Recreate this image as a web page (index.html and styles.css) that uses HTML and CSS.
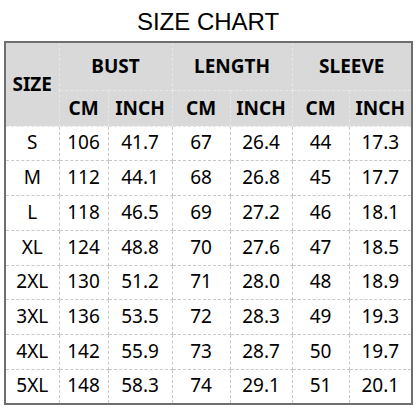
FILE: index.html
```html
<!DOCTYPE html>
<html>
<head>
<meta charset="utf-8">
<link rel="stylesheet" href="styles.css">
</head>
<body>
<h1 class="title">SIZE CHART</h1>
<table class="chart">
  <colgroup>
    <col class="c-size"><col class="c-bcm"><col class="c-bin"><col class="c-lcm"><col class="c-lin"><col class="c-scm"><col class="c-sin">
  </colgroup>
  <thead>
    <tr class="h1">
      <th rowspan="2">SIZE</th>
      <th colspan="2">BUST</th>
      <th colspan="2">LENGTH</th>
      <th colspan="2">SLEEVE</th>
    </tr>
    <tr class="h2">
      <th>CM</th><th>INCH</th><th>CM</th><th>INCH</th><th>CM</th><th>INCH</th>
    </tr>
  </thead>
  <tbody>
    <tr><td>S</td><td>106</td><td>41.7</td><td>67</td><td>26.4</td><td>44</td><td>17.3</td></tr>
    <tr><td>M</td><td>112</td><td>44.1</td><td>68</td><td>26.8</td><td>45</td><td>17.7</td></tr>
    <tr><td>L</td><td>118</td><td>46.5</td><td>69</td><td>27.2</td><td>46</td><td>18.1</td></tr>
    <tr><td>XL</td><td>124</td><td>48.8</td><td>70</td><td>27.6</td><td>47</td><td>18.5</td></tr>
    <tr><td>2XL</td><td>130</td><td>51.2</td><td>71</td><td>28.0</td><td>48</td><td>18.9</td></tr>
    <tr><td>3XL</td><td>136</td><td>53.5</td><td>72</td><td>28.3</td><td>49</td><td>19.3</td></tr>
    <tr><td>4XL</td><td>142</td><td>55.9</td><td>73</td><td>28.7</td><td>50</td><td>19.7</td></tr>
    <tr><td>5XL</td><td>148</td><td>58.3</td><td>74</td><td>29.1</td><td>51</td><td>20.1</td></tr>
  </tbody>
</table>
</body>
</html>
```
FILE: styles.css
```css
html, body {
  margin: 0;
  padding: 0;
  background: #ffffff;
}
body {
  width: 416px;
  height: 416px;
  overflow: hidden;
}
.title {
  margin: 0;
  padding-top: 8px;
  height: 33px;
  font-family: "Liberation Sans", Arial, sans-serif;
  font-weight: normal;
  font-size: 24px;
  line-height: 28px;
  text-align: center;
  color: #000;
}
.chart {
  margin-left: 4px;
  width: 407px;
  height: 363px;
  table-layout: fixed;
  border-collapse: collapse;
  border: 2px solid #6e6e6e;
  font-family: "Noto Sans", "Open Sans", sans-serif;
  font-size: 19px;
  color: #000;
}
.c-size { width: 54px; }
.c-bcm { width: 49px; }
.c-bin { width: 64px; }
.c-lcm { width: 58px; }
.c-lin { width: 62px; }
.c-scm { width: 57px; }
.c-sin { width: 63px; }
.chart th, .chart td {
  padding: 0;
  text-align: center;
  vertical-align: middle;
  border: 1px dashed #c8c8c8;
  line-height: 20px;
}
.chart th {
  background: #d9d9d9;
  font-weight: bold;
  border-color: #e6e6e6;
}
.h1 { height: 48px; }
.h2 { height: 36px; }
.chart tbody tr { height: 34.75px; }
.chart td { padding-bottom: 2px; }
```
